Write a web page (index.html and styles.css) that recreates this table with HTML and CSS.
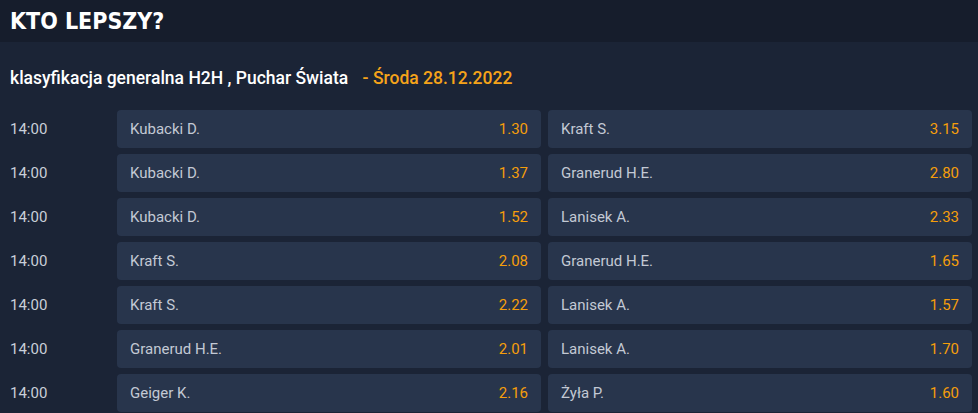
FILE: index.html
```html
<!DOCTYPE html>
<html lang="pl">
<head>
<meta charset="utf-8">
<link rel="stylesheet" href="styles.css">
</head>
<body>
<header class="top">
  <h1 class="title">KTO LEPSZY?</h1>
</header>
<section class="panel">
  <h2 class="sub">klasyfikacja generalna H2H , Puchar Świata <span class="date">- Środa 28.12.2022</span></h2>
  <div class="rows">
    <div class="row"><span class="time">14:00</span><div class="bet"><span>Kubacki D.</span><span class="odd">1.30</span></div><div class="bet"><span>Kraft S.</span><span class="odd">3.15</span></div></div>
    <div class="row"><span class="time">14:00</span><div class="bet"><span>Kubacki D.</span><span class="odd">1.37</span></div><div class="bet"><span>Granerud H.E.</span><span class="odd">2.80</span></div></div>
    <div class="row"><span class="time">14:00</span><div class="bet"><span>Kubacki D.</span><span class="odd">1.52</span></div><div class="bet"><span>Lanisek A.</span><span class="odd">2.33</span></div></div>
    <div class="row"><span class="time">14:00</span><div class="bet"><span>Kraft S.</span><span class="odd">2.08</span></div><div class="bet"><span>Granerud H.E.</span><span class="odd">1.65</span></div></div>
    <div class="row"><span class="time">14:00</span><div class="bet"><span>Kraft S.</span><span class="odd">2.22</span></div><div class="bet"><span>Lanisek A.</span><span class="odd">1.57</span></div></div>
    <div class="row"><span class="time">14:00</span><div class="bet"><span>Granerud H.E.</span><span class="odd">2.01</span></div><div class="bet"><span>Lanisek A.</span><span class="odd">1.70</span></div></div>
    <div class="row"><span class="time">14:00</span><div class="bet"><span>Geiger K.</span><span class="odd">2.16</span></div><div class="bet"><span>Żyła P.</span><span class="odd">1.60</span></div></div>
  </div>
</section>
</body>
</html>
```
FILE: styles.css
```css
* { box-sizing: border-box; }
html, body { margin: 0; padding: 0; }
body {
  background: #1b2436;
  font-family: Roboto, "Liberation Sans", sans-serif;
  color: #c9cfd9;
  overflow: hidden;
}
.top {
  height: 42px;
  background: #161d2c;
  display: flex;
  align-items: center;
  padding-left: 10px;
}
.title {
  margin: 0;
  font-family: "DejaVu Sans Condensed", "DejaVu Sans", sans-serif;
  font-stretch: condensed;
  font-weight: bold;
  font-size: 23px;
  letter-spacing: 0;
  color: #ffffff;
}
.panel {
  padding: 24px 6px 0 10px;
}
.sub {
  margin: 0;
  font-size: 17.5px;
  font-weight: 500;
  color: #ffffff;
  height: 24px;
  line-height: 24px;
}
.date {
  color: #f5a31a;
  margin-left: 10px;
}
.rows {
  margin-top: 20px;
  display: flex;
  flex-direction: column;
  gap: 6px;
}
.row {
  display: grid;
  grid-template-columns: 100px 1fr 1fr;
  column-gap: 7px;
  align-items: center;
}
.time {
  font-size: 15px;
  color: #c9cfd9;
}
.bet {
  height: 38px;
  background: #28354c;
  border-radius: 4px;
  display: flex;
  align-items: center;
  justify-content: space-between;
  padding: 0 13px;
  font-size: 15px;
  color: #c3c9d4;
}
.odd {
  color: #f59e0b;
}
```
